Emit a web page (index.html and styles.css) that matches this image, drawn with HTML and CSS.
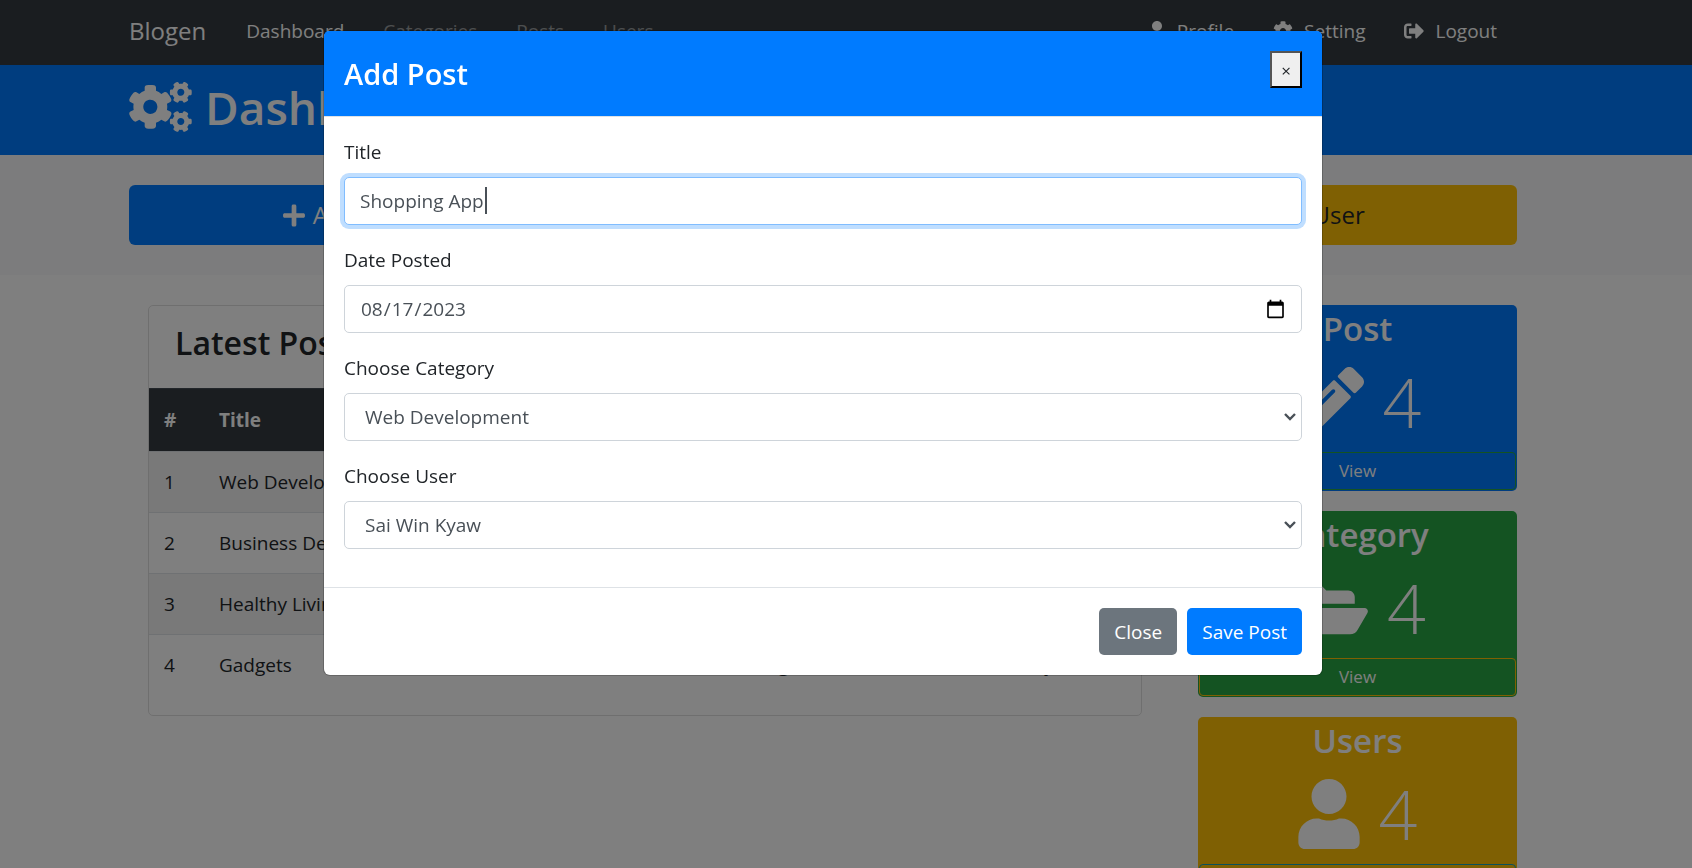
FILE: index.html
```html
<!DOCTYPE html>
<html lang="en">
<head>
<meta charset="utf-8">
<meta name="viewport" content="width=device-width, initial-scale=1">
<title>Blogen</title>
<link rel="stylesheet" href="styles.css">
</head>
<body>
<svg class="sprite" aria-hidden="true">
  <symbol id="i-user" viewBox="0 0 448 512"><path d="M224 256c70.7 0 128-57.3 128-128S294.7 0 224 0 96 57.3 96 128s57.3 128 128 128zm89.6 32h-16.7c-22.2 10.2-46.9 16-72.9 16s-50.6-5.8-72.9-16h-16.7C60.2 288 0 348.2 0 422.4V464c0 26.5 21.5 48 48 48h352c26.5 0 48-21.5 48-48v-41.6c0-74.2-60.2-134.4-134.4-134.4z"/></symbol>
  <symbol id="i-plus" viewBox="0 0 448 512"><path d="M416 208H272V64c0-17.67-14.33-32-32-32h-32c-17.67 0-32 14.33-32 32v144H32c-17.67 0-32 14.33-32 32v32c0 17.67 14.33 32 32 32h144v144c0 17.67 14.33 32 32 32h32c17.67 0 32-14.33 32-32V304h144c17.67 0 32-14.33 32-32v-32c0-17.67-14.33-32-32-32z"/></symbol>
  <symbol id="i-cog" viewBox="0 0 512 512"><path d="M487.4 315.7l-42.6-24.6c4.3-23.2 4.3-47 0-70.2l42.6-24.6c4.9-2.8 7.1-8.6 5.5-14-11.1-35.6-30-67.8-54.7-94.6-3.8-4.1-10-5.1-14.8-2.3L380.8 110c-17.9-15.4-38.5-27.3-60.8-35.1V25.8c0-5.6-3.9-10.5-9.4-11.7-36.7-8.2-74.3-7.8-109.2 0-5.5 1.2-9.4 6.1-9.4 11.7V75c-22.2 7.9-42.8 19.8-60.8 35.1L88.7 85.5c-4.9-2.8-11-1.9-14.8 2.3-24.7 26.7-43.6 58.9-54.7 94.6-1.7 5.4.6 11.2 5.5 14L67.3 221c-4.3 23.2-4.3 47 0 70.2l-42.6 24.6c-4.9 2.8-7.1 8.6-5.5 14 11.1 35.6 30 67.8 54.7 94.6 3.8 4.1 10 5.1 14.8 2.3l42.6-24.6c17.9 15.4 38.5 27.3 60.8 35.1v49.2c0 5.6 3.9 10.5 9.4 11.7 36.7 8.2 74.3 7.8 109.2 0 5.5-1.2 9.4-6.1 9.4-11.7v-49.2c22.2-7.9 42.8-19.8 60.8-35.1l42.6 24.6c4.9 2.8 11 1.9 14.8-2.3 24.7-26.7 43.6-58.9 54.7-94.6 1.5-5.5-.7-11.3-5.6-14.1zM256 336c-44.1 0-80-35.9-80-80s35.9-80 80-80 80 35.9 80 80-35.9 80-80 80z"/></symbol>
  <symbol id="i-cogs" viewBox="0 0 640 512"><path d="M512.1 191l-8.2 14.3c-3 5.3-9.4 7.5-15.1 5.4-11.8-4.4-22.6-10.7-32.1-18.6-4.6-3.8-5.8-10.5-2.8-15.7l8.2-14.3c-6.9-8-12.3-17.3-15.9-27.4h-16.5c-6 0-11.2-4.3-12.2-10.3-2-12-2.1-24.6 0-37.1 1-6 6.2-10.4 12.2-10.4h16.5c3.6-10.1 9-19.4 15.9-27.4l-8.2-14.3c-3-5.2-1.9-11.9 2.8-15.7 9.5-7.9 20.4-14.2 32.1-18.6 5.7-2.1 12.1.1 15.1 5.4l8.2 14.3c10.5-1.9 21.2-1.9 31.7 0L552 6.3c3-5.3 9.4-7.5 15.1-5.4 11.8 4.4 22.6 10.7 32.1 18.6 4.6 3.8 5.8 10.5 2.8 15.7l-8.2 14.3c6.9 8 12.3 17.3 15.9 27.4h16.5c6 0 11.2 4.3 12.2 10.3 2 12 2.1 24.6 0 37.1-1 6-6.2 10.4-12.2 10.4h-16.5c-3.6 10.1-9 19.4-15.9 27.4l8.2 14.3c3 5.2 1.9 11.9-2.8 15.7-9.5 7.9-20.4 14.2-32.1 18.6-5.7 2.1-12.1-.1-15.1-5.4l-8.2-14.3c-10.4 1.9-21.2 1.9-31.7 0zm-10.5-58.8c38.5 29.6 82.4-14.3 52.8-52.8-38.5-29.7-82.4 14.3-52.8 52.8zM386.3 286.1l33.7 16.8c10.1 5.8 14.5 18.1 10.5 29.1-8.9 24.2-26.4 46.4-42.6 65.8-7.4 8.9-20.2 11.1-30.3 5.3l-29.1-16.8c-16 13.7-34.6 24.6-54.9 31.7v33.6c0 11.6-8.3 21.6-19.7 23.6-24.6 4.2-50.4 4.4-75.9 0-11.5-2-20-11.9-20-23.6V418c-20.3-7.2-38.9-18-54.9-31.7L74 403c-10 5.8-22.9 3.6-30.3-5.3-16.2-19.4-33.3-41.6-42.2-65.7-4-10.9.4-23.2 10.5-29.1l33.3-16.8c-3.9-20.9-3.9-42.4 0-63.4L12 205.8c-10.1-5.8-14.6-18.1-10.5-29 8.9-24.2 26-46.4 42.2-65.8 7.4-8.9 20.2-11.1 30.3-5.3l29.1 16.8c16-13.7 34.6-24.6 54.9-31.7V57.1c0-11.5 8.2-21.5 19.6-23.5 24.6-4.2 50.5-4.4 76-.1 11.5 2 20 11.9 20 23.6v33.6c20.3 7.2 38.9 18 54.9 31.7l29.1-16.8c10-5.8 22.9-3.6 30.3 5.3 16.2 19.4 33.2 41.6 42.1 65.8 4 10.9.1 23.2-10 29.1l-33.7 16.8c3.9 21 3.9 42.5 0 63.5zm-117.6 21.1c59.2-77-28.7-164.9-105.7-105.7-59.2 77 28.7 164.9 105.7 105.7zm243.4 182.7l-8.2 14.3c-3 5.3-9.4 7.5-15.1 5.4-11.8-4.4-22.6-10.7-32.1-18.6-4.6-3.8-5.8-10.5-2.8-15.7l8.2-14.3c-6.9-8-12.3-17.3-15.9-27.4h-16.5c-6 0-11.2-4.3-12.2-10.3-2-12-2.1-24.6 0-37.1 1-6 6.2-10.4 12.2-10.4h16.5c3.6-10.1 9-19.4 15.9-27.4l-8.2-14.3c-3-5.2-1.9-11.9 2.8-15.7 9.5-7.9 20.4-14.2 32.1-18.6 5.7-2.1 12.1.1 15.1 5.4l8.2 14.3c10.5-1.9 21.2-1.9 31.7 0l8.2-14.3c3-5.3 9.4-7.5 15.1-5.4 11.8 4.4 22.6 10.7 32.1 18.6 4.6 3.8 5.8 10.5 2.8 15.7l-8.2 14.3c6.9 8 12.3 17.3 15.9 27.4h16.5c6 0 11.2 4.3 12.2 10.3 2 12 2.1 24.6 0 37.1-1 6-6.2 10.4-12.2 10.4h-16.5c-3.6 10.1-9 19.4-15.9 27.4l8.2 14.3c3 5.2 1.9 11.9-2.8 15.7-9.5 7.9-20.4 14.2-32.1 18.6-5.7 2.1-12.1-.1-15.1-5.4l-8.2-14.3c-10.4 1.9-21.2 1.9-31.7 0zM501.6 431c38.5 29.6 82.4-14.3 52.8-52.8-38.5-29.6-82.4 14.3-52.8 52.8z"/></symbol>
  <symbol id="i-logout" viewBox="0 0 512 512"><path d="M497 273L329 441c-15 15-41 4.5-41-17v-96H152c-13.3 0-24-10.7-24-24v-96c0-13.3 10.7-24 24-24h136V88c0-21.4 25.9-32 41-17l168 168c9.3 9.4 9.3 24.6 0 34zM192 436v-40c0-6.6-5.4-12-12-12H96c-17.7 0-32-14.3-32-32V160c0-17.7 14.3-32 32-32h84c6.6 0 12-5.4 12-12V76c0-6.6-5.4-12-12-12H96c-53 0-96 43-96 96v192c0 53 43 96 96 96h84c6.6 0 12-5.4 12-12z"/></symbol>
  <symbol id="i-pencil" viewBox="0 0 512 512"><path d="M497.9 142.1l-46.1 46.1c-4.7 4.7-12.3 4.7-17 0l-111-111c-4.7-4.7-4.7-12.3 0-17l46.1-46.1c18.7-18.7 49.1-18.7 67.9 0l60.1 60.1c18.8 18.7 18.8 49.1 0 67.9zM284.2 99.8L21.6 362.4.4 483.9c-2.9 16.4 11.4 30.6 27.8 27.8l121.5-21.3 262.6-262.6c4.7-4.7 4.7-12.3 0-17l-111-111c-4.8-4.7-12.4-4.7-17.1 0zM124.1 339.9c-5.5-5.5-5.5-14.3 0-19.8l154-154c5.5-5.5 14.3-5.5 19.8 0s5.5 14.3 0 19.8l-154 154c-5.5 5.5-14.3 5.5-19.8 0zM88 424h48v36.3l-64.5 11.3-31.1-31.1L51.7 376H88v48z"/></symbol>
  <symbol id="i-folder" viewBox="0 0 576 512"><path d="M572.694 292.093L500.27 416.248A63.997 63.997 0 0 1 444.989 448H45.025c-18.523 0-30.064-20.093-20.731-36.093l72.424-124.155A64 64 0 0 1 152 256h399.964c18.523 0 30.064 20.093 20.73 36.093zM152 224h328v-48c0-26.51-21.49-48-48-48H272l-64-64H48C21.49 64 0 85.49 0 112v278.046l69.077-118.418C86.214 242.25 117.989 224 152 224z"/></symbol>
</svg>

<nav class="navbar">
  <div class="container navbar-inner">
    <a class="brand" href="#">Blogen</a>
    <div class="nav-links">
      <a class="nav-link active" href="#">Dashboard</a>
      <a class="nav-link" href="#">Categories</a>
      <a class="nav-link" href="#">Posts</a>
      <a class="nav-link" href="#">Users</a>
    </div>
    <div class="nav-links nav-right">
      <a class="nav-link active" href="#"><svg class="icon icon-user"><use href="#i-user"/></svg>Profile</a>
      <a class="nav-link active" href="#"><svg class="icon"><use href="#i-cog"/></svg>Setting</a>
      <a class="nav-link active" href="#"><svg class="icon"><use href="#i-logout"/></svg>Logout</a>
    </div>
  </div>
</nav>

<header class="page-header">
  <div class="container">
    <h1 class="page-title"><svg class="cogs"><use href="#i-cogs"/></svg>Dashboard</h1>
  </div>
</header>

<section class="actions">
  <div class="container actions-row">
    <button class="action primary" type="button"><svg class="plus"><use href="#i-plus"/></svg>Add Post</button>
    <button class="action success" type="button"><svg class="plus"><use href="#i-plus"/></svg>Add Category</button>
    <button class="action warning" type="button"><svg class="plus"><use href="#i-plus"/></svg>Add User</button>
  </div>
</section>

<main class="main">
  <div class="container main-row">
    <section class="posts">
      <h2 class="posts-title">Latest Posts</h2>
      <table class="posts-table">
        <thead>
          <tr><th class="c-num">#</th><th class="c-title">Title</th><th class="c-cat">Category</th><th class="c-date">Date</th><th>User</th></tr>
        </thead>
        <tbody>
          <tr><td>1</td><td>Web Development</td><td>Web Development</td><td>August 17 2023</td><td>Sai Win Kyaw</td></tr>
          <tr><td>2</td><td>Business Deal</td><td>Business</td><td>August 17 2023</td><td>Sai Win Kyaw</td></tr>
          <tr><td>3</td><td>Healthy Living</td><td>Health</td><td>August 17 2023</td><td>Sai Win Kyaw</td></tr>
          <tr><td>4</td><td>Gadgets</td><td>Tech</td><td>August 17 2023</td><td>Sai Win Kyaw</td></tr>
        </tbody>
      </table>
    </section>
    <aside class="stats">
      <section class="stat primary">
        <h3 class="stat-title">Post</h3>
        <p class="stat-count"><svg class="stat-icon"><use href="#i-pencil"/></svg>4</p>
        <a class="view view-green" href="#">View</a>
      </section>
      <section class="stat success">
        <h3 class="stat-title">Category</h3>
        <p class="stat-count"><svg class="stat-icon folder"><use href="#i-folder"/></svg>4</p>
        <a class="view view-yellow" href="#">View</a>
      </section>
      <section class="stat warning">
        <h3 class="stat-title">Users</h3>
        <p class="stat-count"><svg class="stat-icon person"><use href="#i-user"/></svg>4</p>
        <a class="view view-teal" href="#">View</a>
      </section>
    </aside>
  </div>
</main>

<div class="backdrop">
  <div class="modal" role="dialog" aria-modal="true" aria-labelledby="modal-title">
    <header class="modal-header">
      <h2 class="modal-title" id="modal-title">Add Post</h2>
      <button class="modal-x" type="button" aria-label="Close dialog">×</button>
    </header>
    <form class="modal-form">
      <div class="modal-body">
        <div class="field">
          <label for="title">Title</label>
          <div class="caret-wrap">
            <input class="control focused" id="title" type="text" value="Shopping App">
            <span class="caret"></span>
          </div>
        </div>
        <div class="field">
          <label for="date">Date Posted</label>
          <input class="control" id="date" type="date" value="2023-08-17">
        </div>
        <div class="field">
          <label for="category">Choose Category</label>
          <select class="control select" id="category"><option>Web Development</option></select>
        </div>
        <div class="field">
          <label for="user">Choose User</label>
          <select class="control select" id="user"><option>Sai Win Kyaw</option></select>
        </div>
      </div>
      <footer class="modal-footer">
        <button class="btn secondary" type="button">Close</button>
        <button class="btn primary" type="button">Save Post</button>
      </footer>
    </form>
  </div>
</div>
</body>
</html>
```
FILE: styles.css
```css
*, *::before, *::after { box-sizing: border-box; }

html, body { height: 100%; }

body {
  margin: 0;
  overflow: hidden;
  background: #fff;
  color: #212529;
  font-family: "Open Sans", "Noto Sans", sans-serif;
  font-size: 19px;
  line-height: 30px;
}

h1, h2, h3, p { margin: 0; }
a { color: inherit; text-decoration: none; }
button, input, select { font: inherit; }
svg { fill: currentColor; flex: none; }
.sprite { display: none; }

.primary { background: #007bff; color: #fff; }
.success { background: #28a745; color: #fff; }
.warning { background: #ffc107; color: #fff; }
.secondary { background: #6c757d; color: #fff; }

/* The right padding stands in for the hidden scrollbar while a dialog is open. */
.navbar, .page-header, .actions, .main { padding-right: 46px; }

.container {
  max-width: 1426px;
  margin: 0 auto;
  padding: 0 19px;
}

.navbar { background: #343a40; color: #fff; }
.navbar-inner { display: flex; align-items: center; height: 65px; padding-bottom: 4px; }
.brand { margin-right: 40px; font-size: 24px; }
.nav-links { display: flex; gap: 39px; }
.nav-right { margin-left: auto; padding-right: 20px; }
.nav-link { display: flex; align-items: center; gap: 11px; color: rgba(255, 255, 255, .5); }
.nav-link.active { color: #fff; }
.icon { width: 20px; height: 20px; }
.icon-user { width: 18px; }

.page-header { background: #007bff; color: #fff; }
.page-title {
  display: flex;
  align-items: center;
  gap: 13px;
  height: 90px;
  padding-bottom: 6px;
  font-size: 46px;
  line-height: 60px;
  font-weight: 600;
}
.cogs { width: 63px; height: 50px; }

.actions { background: #f8f9fa; }
.actions-row {
  display: grid;
  grid-template-columns: repeat(3, 1fr);
  gap: 38px;
  padding-top: 30px;
  padding-bottom: 30px;
}
.action {
  display: flex;
  align-items: center;
  justify-content: center;
  gap: 8px;
  height: 60px;
  border: 0;
  border-radius: 6px;
  font-size: 24px;
}
.action.warning { color: #212529; }
.plus { width: 22px; height: 25px; }

.main-row {
  display: grid;
  grid-template-columns: minmax(0, 994px) minmax(0, 319px);
  justify-content: space-between;
  align-items: start;
  padding-top: 30px;
  padding-left: 38px;
}
.posts {
  padding-bottom: 19px;
  border: 1px solid #dfdfdf;
  border-radius: 5px;
}
.posts-title {
  padding: 16px 26px 24px;
  font-size: 32px;
  line-height: 42px;
  font-weight: 600;
}
.posts-table { width: 100%; border-collapse: collapse; table-layout: fixed; }
.posts-table th, .posts-table td {
  height: 61px;
  padding: 0 15px;
  border-top: 1px solid #dee2e6;
  text-align: left;
}
.posts-table thead th {
  height: 63px;
  border-color: #454d55;
  background: #343a40;
  color: #fff;
}
.posts-table tbody tr:nth-child(odd) { background: #f2f2f2; }
.c-num { width: 55px; }
.c-title { width: 24%; }
.c-cat { width: 30%; }
.c-date { width: 21%; }

.stats { display: grid; gap: 20px; }
.stat {
  padding: 1px;
  border-radius: 5px;
  text-align: center;
}
.stat-title { font-size: 33px; line-height: 46px; font-weight: 600; }
.stat-count {
  display: flex;
  align-items: center;
  justify-content: center;
  gap: 19px;
  height: 100px;
  font-size: 68px;
  line-height: 84px;
  font-weight: 300;
}
.stat-icon { width: 70px; height: 70px; }
.stat-icon.folder { width: 79px; }
.stat-icon.person { width: 62px; }
.view {
  display: block;
  padding: 5px;
  border: 1px solid;
  border-radius: 4px;
  font-size: 17px;
  line-height: 26px;
}
.view-green { border-color: #28a745; color: #fff; }
.view-yellow { border-color: #ffc107; color: #fff; }
.view-teal { border-color: #17a2b8; color: #fff; }

.backdrop {
  position: fixed;
  inset: 0;
  padding: 31px 46px 31px 0;
  background: rgba(0, 0, 0, .5);
}
.modal {
  width: 100%;
  max-width: 998px;
  margin: 0 auto;
  border-radius: 6px;
  background: #fff;
  box-shadow: 0 0 0 1px rgba(0, 0, 0, .2);
}
.modal-header {
  display: flex;
  align-items: flex-start;
  justify-content: space-between;
  padding: 20px;
  border-bottom: 1px solid #dee2e6;
  border-radius: 5px 5px 0 0;
  background: #007bff;
  color: #fff;
}
.modal-title { font-size: 29px; line-height: 45px; font-weight: 600; }
.modal-x {
  width: 32px;
  height: 37px;
  padding: 2px 0 0;
  border: 2px outset #000;
  background: #efefef;
  color: #212529;
  font-size: 17px;
}
.modal-body { display: grid; gap: 20px; padding: 20px 20px 38px; }
.field { display: grid; }
.field label { margin-bottom: 10px; line-height: 30px; }
.control {
  width: 100%;
  height: 48px;
  padding: 7px 15px;
  border: 1px solid #ced4da;
  border-radius: 5px;
  outline: 0;
  background: #fff;
  color: #495057;
}
.control::-webkit-calendar-picker-indicator { width: 21px; height: 21px; padding: 0; }
.select {
  appearance: none;
  padding-left: 20px;
  background: #fff url("data:image/svg+xml,%3Csvg xmlns='http://www.w3.org/2000/svg' viewBox='0 0 12 8'%3E%3Cpath d='M1 1l5 5 5-5' fill='none' stroke='%23495057' stroke-width='2.4'/%3E%3C/svg%3E") no-repeat right 5px center / 12px 8px;
}
.control.focused {
  border-color: #80bdff;
  box-shadow: 0 0 0 4px rgba(0, 123, 255, .25);
  caret-color: transparent;
}
.caret-wrap { position: relative; }
.caret {
  position: absolute;
  top: 10px;
  left: 141px;
  width: 2px;
  height: 27px;
  background: #495057;
}
.modal-footer {
  display: flex;
  justify-content: flex-end;
  gap: 10px;
  padding: 20px;
  border-top: 1px solid #dee2e6;
}
.btn {
  height: 47px;
  padding: 0 15px;
  border: 0;
  border-radius: 5px;
}
```
